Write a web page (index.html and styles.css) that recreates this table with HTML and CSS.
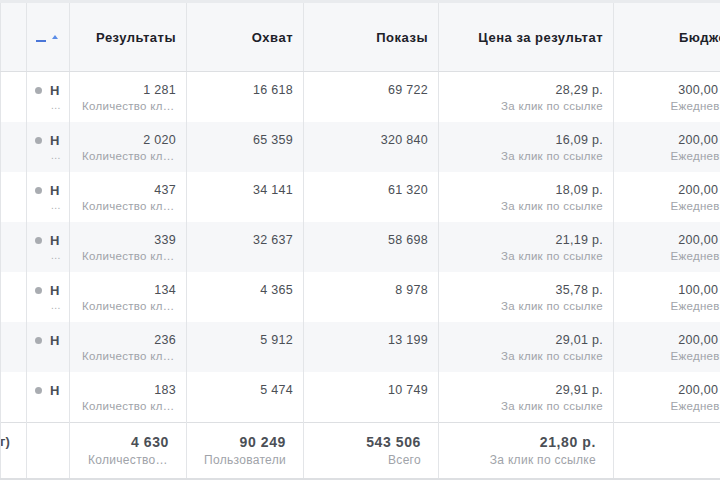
FILE: index.html
```html
<!DOCTYPE html>
<html lang="ru">
<head>
<meta charset="utf-8">
<link rel="stylesheet" href="styles.css">
</head>
<body>
<div class="wrap">
<table class="grid">
  <colgroup>
    <col class="c0"><col class="c1"><col class="c2"><col class="c3"><col class="c4"><col class="c5"><col class="c6">
  </colgroup>
  <thead>
    <tr>
      <th></th>
      <th class="sortcol"><span class="dash"></span><span class="tri"></span></th>
      <th>Результаты</th>
      <th>Охват</th>
      <th>Показы</th>
      <th>Цена за результат</th>
      <th>Бюджет</th>
    </tr>
  </thead>
  <tbody>
    <tr>
      <td></td>
      <td class="st"><div class="stl"><span class="dot"></span><b>Н</b></div><div class="more">...</div></td>
      <td><div class="n">1 281</div><div class="s">Количество кликов по ссылке</div></td>
      <td><div class="n">16 618</div></td>
      <td><div class="n">69 722</div></td>
      <td><div class="n">28,29 р.</div><div class="s">За клик по ссылке</div></td>
      <td><div class="n">300,00 р.</div><div class="s">Ежедневно</div></td>
    </tr>
    <tr>
      <td></td>
      <td class="st"><div class="stl"><span class="dot"></span><b>Н</b></div><div class="more">...</div></td>
      <td><div class="n">2 020</div><div class="s">Количество кликов по ссылке</div></td>
      <td><div class="n">65 359</div></td>
      <td><div class="n">320 840</div></td>
      <td><div class="n">16,09 р.</div><div class="s">За клик по ссылке</div></td>
      <td><div class="n">200,00 р.</div><div class="s">Ежедневно</div></td>
    </tr>
    <tr>
      <td></td>
      <td class="st"><div class="stl"><span class="dot"></span><b>Н</b></div><div class="more">...</div></td>
      <td><div class="n">437</div><div class="s">Количество кликов по ссылке</div></td>
      <td><div class="n">34 141</div></td>
      <td><div class="n">61 320</div></td>
      <td><div class="n">18,09 р.</div><div class="s">За клик по ссылке</div></td>
      <td><div class="n">200,00 р.</div><div class="s">Ежедневно</div></td>
    </tr>
    <tr>
      <td></td>
      <td class="st"><div class="stl"><span class="dot"></span><b>Н</b></div><div class="more">...</div></td>
      <td><div class="n">339</div><div class="s">Количество кликов по ссылке</div></td>
      <td><div class="n">32 637</div></td>
      <td><div class="n">58 698</div></td>
      <td><div class="n">21,19 р.</div><div class="s">За клик по ссылке</div></td>
      <td><div class="n">200,00 р.</div><div class="s">Ежедневно</div></td>
    </tr>
    <tr>
      <td></td>
      <td class="st"><div class="stl"><span class="dot"></span><b>Н</b></div><div class="more">...</div></td>
      <td><div class="n">134</div><div class="s">Количество кликов по ссылке</div></td>
      <td><div class="n">4 365</div></td>
      <td><div class="n">8 978</div></td>
      <td><div class="n">35,78 р.</div><div class="s">За клик по ссылке</div></td>
      <td><div class="n">100,00 р.</div><div class="s">Ежедневно</div></td>
    </tr>
    <tr>
      <td></td>
      <td class="st"><div class="stl"><span class="dot"></span><b>Н</b></div></td>
      <td><div class="n">236</div><div class="s">Количество кликов по ссылке</div></td>
      <td><div class="n">5 912</div></td>
      <td><div class="n">13 199</div></td>
      <td><div class="n">29,01 р.</div><div class="s">За клик по ссылке</div></td>
      <td><div class="n">200,00 р.</div><div class="s">Ежедневно</div></td>
    </tr>
    <tr>
      <td></td>
      <td class="st"><div class="stl"><span class="dot"></span><b>Н</b></div></td>
      <td><div class="n">183</div><div class="s">Количество кликов по ссылке</div></td>
      <td><div class="n">5 474</div></td>
      <td><div class="n">10 749</div></td>
      <td><div class="n">29,91 р.</div><div class="s">За клик по ссылке</div></td>
      <td><div class="n">200,00 р.</div><div class="s">Ежедневно</div></td>
    </tr>
  </tbody>
  <tfoot>
    <tr>
      <td class="lbl"><div class="lblin">г)</div></td>
      <td></td>
      <td class="narrow"><div class="fn">4 630</div><div class="fs">Количество кликов</div></td>
      <td><div class="fn">90 249</div><div class="fs">Пользователи</div></td>
      <td><div class="fn">543 506</div><div class="fs">Всего</div></td>
      <td><div class="fn">21,80 р.</div><div class="fs">За клик по ссылке</div></td>
      <td></td>
    </tr>
  </tfoot>
</table>
</div>
</body>
</html>
```

FILE: styles.css
```css
html, body {
  margin: 0;
  padding: 0;
}
body {
  font-family: "Liberation Sans", Arial, sans-serif;
  color: #4b4f56;
  width: 720px;
  height: 480px;
  overflow: hidden;
  background: #e9ebee;
}
.wrap {
  width: 720px;
  overflow: hidden;
  background: #ffffff;
}
.grid {
  table-layout: fixed;
  border-collapse: collapse;
  width: 743px;
}
.c0 { width: 26px; }
.c1 { width: 43px; }
.c2 { width: 117px; }
.c3 { width: 117px; }
.c4 { width: 135px; }
.c5 { width: 175px; }
.c6 { width: 130px; }

.grid th, .grid td {
  border-left: 1px solid #e3e5e8;
  border-right: 1px solid #e3e5e8;
  padding: 0 10px 0 12px;
  text-align: right;
  overflow: hidden;
  white-space: nowrap;
}
.grid th {
  height: 67px;
  border-top: 3px solid #e9ebee;
  border-bottom: 1px solid #dddfe2;
  background: #f6f7f9;
  font-size: 13px;
  font-weight: bold;
  color: #1d2129;
  letter-spacing: 0.5px;
  vertical-align: middle;
  padding-top: 1px;
}
.sortcol { text-align: left !important; padding-left: 9px !important; padding-right: 0 !important; }
.dash {
  display: inline-block;
  width: 10px;
  height: 2px;
  background: #4a76d8;
  vertical-align: middle;
  margin-top: 4px;
}
.tri {
  display: inline-block;
  width: 0;
  height: 0;
  border-left: 3.5px solid transparent;
  border-right: 3.5px solid transparent;
  border-bottom: 4px solid #5b8de8;
  margin-left: 6px;
  vertical-align: middle;
  margin-top: -3px;
}

.grid tbody td {
  height: 40px;
  padding-top: 10px;
  vertical-align: top;
}
.grid tbody tr:nth-child(even) td { background: #f6f7f9; }
.n {
  font-size: 12.5px;
  line-height: 16px;
  color: #4b4f56;
  letter-spacing: 0.3px;
}
.s {
  font-size: 11.5px;
  line-height: 16px;
  color: #a0a3a9;
  overflow: hidden;
  text-overflow: ellipsis;
  white-space: nowrap;
  letter-spacing: 0.3px;
}
.grid td.st {
  text-align: left;
  padding-left: 8px;
  padding-right: 0;
}
.stl {
  display: flex;
  align-items: center;
  height: 16px;
}
.dot {
  width: 7px;
  height: 7px;
  border-radius: 50%;
  background: #a9acb1;
  margin-right: 8px;
}
.stl b {
  font-size: 13px;
  color: #4b4f56;
}
.more {
  padding-left: 16px;
  font-size: 10px;
  line-height: 12px;
  color: #a9acb1;
  margin-top: 2px;
  letter-spacing: 0.5px;
}

.grid tfoot td {
  height: 45px;
  padding-top: 10px;
  padding-left: 8px;
  padding-right: 17px;
  vertical-align: top;
  border-top: 1px solid #dddfe2;
  border-bottom: 2px solid #dddfe2;
}
.grid tfoot td.narrow {
  padding-left: 18px;
}
.grid tfoot td.lbl {
  text-align: left;
  padding: 10px 0 0 0;
}
.lblin {
  font-size: 13px;
  font-weight: bold;
  line-height: 18px;
  color: #4b4f56;
  margin-left: -1px;
}
.fn {
  font-size: 14px;
  font-weight: bold;
  line-height: 18px;
  color: #4b4f56;
  letter-spacing: 0.6px;
}
.fs {
  font-size: 12px;
  line-height: 18px;
  color: #a0a3a9;
  overflow: hidden;
  text-overflow: ellipsis;
  white-space: nowrap;
  letter-spacing: 0.3px;
}
```
